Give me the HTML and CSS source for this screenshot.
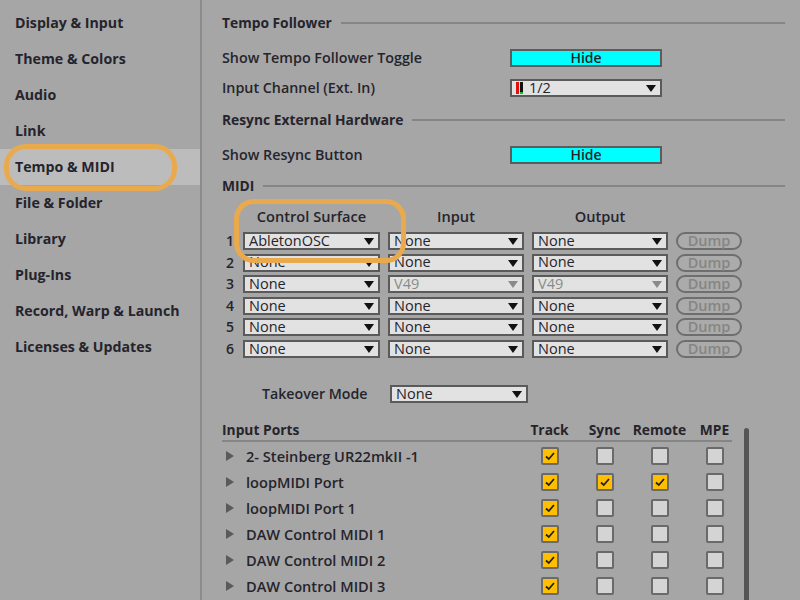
FILE: index.html
```html
<!DOCTYPE html>
<html lang="en">
<head>
    <meta charset="UTF-8">
    <meta name="viewport" content="width=device-width, initial-scale=1.0">
    <title>Preferences - Tempo &amp; MIDI</title>
    <link rel="stylesheet" href="styles.css">
</head>
<body>
    <div class="prefs">
        <nav class="sidebar">
            <div class="nav-item">Display &amp; Input</div>
            <div class="nav-item">Theme &amp; Colors</div>
            <div class="nav-item">Audio</div>
            <div class="nav-item">Link</div>
            <div class="nav-item active">Tempo &amp; MIDI</div>
            <div class="nav-item">File &amp; Folder</div>
            <div class="nav-item">Library</div>
            <div class="nav-item">Plug-Ins</div>
            <div class="nav-item">Record, Warp &amp; Launch</div>
            <div class="nav-item">Licenses &amp; Updates</div>
        </nav>

        <main class="content">
            <div class="section-title first">Tempo Follower</div>
            <div class="setting">
                <span class="setting-label">Show Tempo Follower Toggle</span>
                <button class="toggle">Hide</button>
            </div>
            <div class="setting">
                <span class="setting-label">Input Channel (Ext. In)</span>
                <div class="select wide">
                    <span class="meter"><i class="red"></i><i class="dark"></i></span>1/2
                </div>
            </div>

            <div class="section-title resync">Resync External Hardware</div>
            <div class="setting">
                <span class="setting-label">Show Resync Button</span>
                <button class="toggle">Hide</button>
            </div>

            <div class="section-title midi">MIDI</div>
            <div class="surface-head">
                <span class="num"></span>
                <span class="col-cs">Control Surface</span>
                <span class="col-io">Input</span>
                <span class="col-io">Output</span>
            </div>
            <div class="surfaces">
                <div class="surface-row">
                    <span class="num">1</span>
                    <div class="select cs">AbletonOSC</div>
                    <div class="select io">None</div>
                    <div class="select io">None</div>
                    <button class="dump">Dump</button>
                </div>
                <div class="surface-row">
                    <span class="num">2</span>
                    <div class="select cs">None</div>
                    <div class="select io">None</div>
                    <div class="select io">None</div>
                    <button class="dump">Dump</button>
                </div>
                <div class="surface-row">
                    <span class="num">3</span>
                    <div class="select cs">None</div>
                    <div class="select io disabled">V49</div>
                    <div class="select io disabled">V49</div>
                    <button class="dump">Dump</button>
                </div>
                <div class="surface-row">
                    <span class="num">4</span>
                    <div class="select cs">None</div>
                    <div class="select io">None</div>
                    <div class="select io">None</div>
                    <button class="dump">Dump</button>
                </div>
                <div class="surface-row">
                    <span class="num">5</span>
                    <div class="select cs">None</div>
                    <div class="select io">None</div>
                    <div class="select io">None</div>
                    <button class="dump">Dump</button>
                </div>
                <div class="surface-row">
                    <span class="num">6</span>
                    <div class="select cs">None</div>
                    <div class="select io">None</div>
                    <div class="select io">None</div>
                    <button class="dump">Dump</button>
                </div>
            </div>

            <div class="takeover">
                <span class="takeover-label">Takeover Mode</span>
                <div class="select cs">None</div>
            </div>

            <div class="ports-wrap">
                <div class="ports">
                    <div class="ports-head">
                        <span class="port-title">Input Ports</span>
                        <span>Track</span>
                        <span>Sync</span>
                        <span>Remote</span>
                        <span>MPE</span>
                    </div>
                    <div class="port-row">
                        <span class="port-name">2- Steinberg UR22mkII -1</span>
                        <span class="check on"></span><span class="check"></span><span class="check"></span><span class="check"></span>
                    </div>
                    <div class="port-row">
                        <span class="port-name">loopMIDI Port</span>
                        <span class="check on"></span><span class="check on"></span><span class="check on"></span><span class="check"></span>
                    </div>
                    <div class="port-row">
                        <span class="port-name">loopMIDI Port 1</span>
                        <span class="check on"></span><span class="check"></span><span class="check"></span><span class="check"></span>
                    </div>
                    <div class="port-row">
                        <span class="port-name">DAW Control MIDI 1</span>
                        <span class="check on"></span><span class="check"></span><span class="check"></span><span class="check"></span>
                    </div>
                    <div class="port-row">
                        <span class="port-name">DAW Control MIDI 2</span>
                        <span class="check on"></span><span class="check"></span><span class="check"></span><span class="check"></span>
                    </div>
                    <div class="port-row">
                        <span class="port-name">DAW Control MIDI 3</span>
                        <span class="check on"></span><span class="check"></span><span class="check"></span><span class="check"></span>
                    </div>
                </div>
                <div class="scrollbar"></div>
            </div>
        </main>

        <!-- hand-drawn highlight rings -->
        <div class="ring ring-nav"></div>
        <div class="ring ring-cs"></div>
    </div>
</body>
</html>
```

FILE: styles.css
```css
* {
    margin: 0;
    padding: 0;
    box-sizing: border-box;
}

body {
    font-family: "Open Sans", Lato, sans-serif;
    background: #a6a6a6;
    color: #25242c;
    font-size: 14px;
    line-height: 18px;
    overflow: hidden;
}

.prefs {
    position: relative;
    display: flex;
    width: 800px;
    height: 600px;
}

/* sidebar */
.sidebar {
    width: 202px;
    flex-shrink: 0;
    padding-top: 5px;
    border-right: 2px solid #8c8c8c;
}

.nav-item {
    height: 36px;
    display: flex;
    align-items: center;
    padding-left: 15px;
    font-size: 14.2px;
    font-weight: 700;
}

.nav-item.active {
    background: #bcbcbc;
}

/* main */
.content {
    flex: 1;
    padding: 9px 15px 0 20px;
}

.section-title {
    height: 28px;
    display: flex;
    align-items: center;
    gap: 9px;
    font-weight: 700;
    font-size: 13.8px;
}

.section-title::after {
    content: "";
    flex: 1;
    border-top: 2px solid #858585;
}

.section-title.resync {
    margin-top: 3px;
}

.section-title.midi {
    margin-top: 2px;
}

.setting {
    height: 30px;
    display: flex;
    align-items: center;
}

.section-title + .setting {
    margin-top: 6px;
}

.setting-label {
    width: 288px;
    font-size: 14.3px;
    font-weight: 600;
}

.toggle {
    width: 152px;
    height: 18px;
    padding: 0;
    background: #00ffff;
    border: 2px solid #5c5c5c;
    font-family: inherit;
    font-size: 14px;
    font-weight: 600;
    line-height: 1;
    color: #25242c;
}

/* dropdowns */
.select {
    position: relative;
    height: 18px;
    display: flex;
    align-items: center;
    padding-left: 4px;
    background: #e2e2e2;
    border: 2px solid #5a5a5a;
    font-size: 14.5px;
    font-weight: 500;
    line-height: 1;
}

.select::after {
    content: "";
    position: absolute;
    right: 4px;
    top: 4px;
    border-left: 5px solid transparent;
    border-right: 5px solid transparent;
    border-top: 7px solid #111;
}

.select.wide {
    width: 152px;
}

.select.disabled {
    color: #8a8a8a;
}

.select.disabled::after {
    border-top-color: #8a8a8a;
}

.meter {
    display: inline-flex;
    gap: 1px;
    margin-right: 6px;
}

.meter i {
    width: 3px;
    height: 12px;
}

.meter .red {
    background: #e01010;
}

.meter .dark {
    background: linear-gradient(#111 80%, #18c030 80%);
}

/* control surfaces */
.surface-head {
    display: flex;
    margin-top: 6px;
    height: 20px;
    align-items: center;
    font-weight: 600;
    font-size: 14.6px;
}

.num {
    width: 21px;
    padding-left: 4px;
    flex-shrink: 0;
    font-weight: 600;
}

.col-cs {
    width: 145px;
    padding-right: 8px;
    text-align: center;
}

.col-io {
    width: 144px;
    padding-right: 8px;
    text-align: center;
}

.surfaces {
    display: flex;
    flex-direction: column;
    gap: 3.6px;
    margin-top: 6px;
}

.surface-row {
    height: 18px;
    display: flex;
    align-items: center;
    gap: 8px;
}

.surface-row .num {
    width: 13px;
}

.select.cs {
    width: 137px;
}

.select.io {
    width: 136px;
}

.surface-row .select.io:first-of-type {
    margin-left: -1px;
}

.dump {
    width: 66px;
    height: 18px;
    padding: 0;
    border: 2px solid #6e6e6e;
    border-radius: 9px;
    background: #ababab;
    color: #858585;
    font-family: inherit;
    font-size: 14.5px;
    font-weight: 600;
    line-height: 1;
}

/* takeover */
.takeover {
    height: 18px;
    display: flex;
    align-items: center;
    margin-top: 27px;
}

.takeover-label {
    width: 168px;
    padding-left: 40px;
    font-weight: 600;
    font-size: 14.2px;
}

.takeover .select {
    width: 138px;
}

/* ports */
.ports-wrap {
    display: flex;
    gap: 12px;
    margin-top: 17px;
}

.ports {
    width: 510px;
}

.ports-head,
.port-row {
    display: grid;
    grid-template-columns: 300px repeat(4, 55px);
    align-items: center;
}

.ports-head {
    height: 22px;
    border-bottom: 2px solid #858585;
    font-weight: 700;
    font-size: 13.8px;
}

.ports-head span {
    text-align: center;
}

.ports-head .port-title {
    text-align: left;
}

.port-row {
    height: 26px;
}

.ports-head + .port-row {
    margin-top: 1px;
}

.port-name {
    display: flex;
    align-items: center;
    font-weight: 600;
    font-size: 14.6px;
}

.port-name::before {
    content: "";
    border-top: 5px solid transparent;
    border-bottom: 5px solid transparent;
    border-left: 8px solid #5a5a5a;
    margin: 0 12px 0 4px;
}

.check {
    justify-self: center;
    width: 18px;
    height: 18px;
    border: 2px solid #6a6a6a;
    border-radius: 2px;
    background: #d4d4d4;
}

.check.on {
    background: #ffbe00 url("data:image/svg+xml,%3Csvg xmlns='http://www.w3.org/2000/svg' viewBox='0 0 14 14'%3E%3Cpath d='M3 7.5 L5.8 10 L11 4' fill='none' stroke='%23222' stroke-width='1.8'/%3E%3C/svg%3E") center / 14px no-repeat;
}

.scrollbar {
    width: 5px;
    height: 180px;
    margin-top: 8px;
    background: #555;
    border-radius: 3px;
}

/* annotation rings */
.ring {
    position: absolute;
    border: 5px solid #e9aa4d;
    border-radius: 22px;
}

.ring-nav {
    left: 4px;
    top: 144px;
    width: 173px;
    height: 47px;
}

.ring-cs {
    left: 234px;
    top: 199px;
    width: 172px;
    height: 64px;
    border-radius: 20px;
}
```
